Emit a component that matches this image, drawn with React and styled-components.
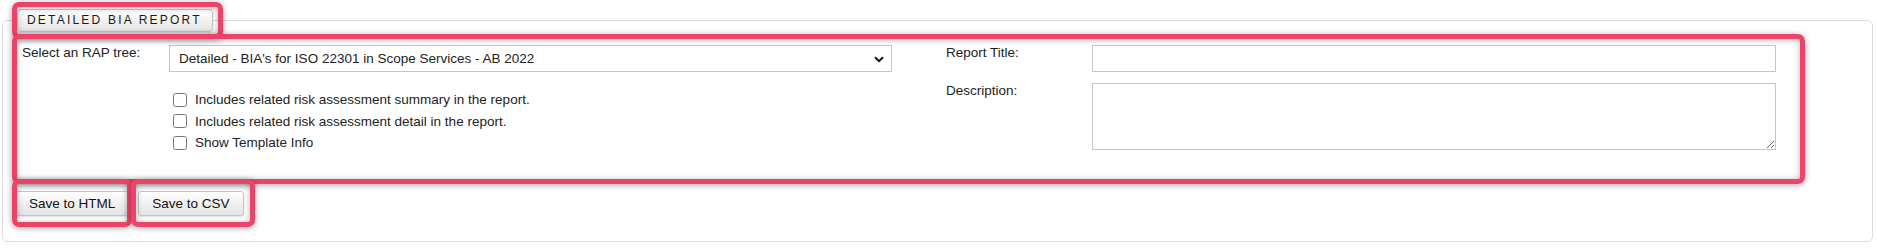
import React from 'react';
import styled, { createGlobalStyle } from 'styled-components';

const GlobalStyle = createGlobalStyle`
  html, body {
    margin: 0;
    padding: 0;
    background: #fff;
  }
  body {
    font-family: "Liberation Sans", Arial, sans-serif;
    font-size: 13.5px;
    color: #222;
  }
`;

const Page = styled.div`
  position: relative;
  width: 1877px;
  height: 250px;
  box-sizing: border-box;
  padding: 9px 4px 8px 2px;
`;

const Panel = styled.fieldset`
  margin: 0;
  border: 1px solid #dcdcdc;
  border-radius: 5px;
  padding: 13px 0 25px 14px;
  min-width: 0;
`;

const Legend = styled.legend`
  box-sizing: border-box;
  height: 23px;
  line-height: 21px;
  padding: 0 10px 0 9px;
  border: 1px solid #c9c9c9;
  border-radius: 4px;
  background: linear-gradient(#ffffff, #e4e4e4);
  box-shadow: 0 1px 2px rgba(0, 0, 0, 0.15);
  font-size: 12px;
  letter-spacing: 2.2px;
  text-transform: uppercase;
  color: #1a1a1a;
`;

const FormRow = styled.div`
  display: flex;
  gap: 49px;
  align-items: flex-start;
`;

const FieldGroup = styled.div`
  display: grid;
  grid-template-columns: ${p => p.$label}px ${p => p.$field}px;
  row-gap: 11px;
`;

const Label = styled.div`
  padding-left: 5px;
  line-height: 15px;
`;

const SelectWrap = styled.div`
  position: relative;
  height: 27px;
`;

const Select = styled.select`
  appearance: none;
  box-sizing: border-box;
  width: 100%;
  height: 27px;
  border: 1px solid #c6c6c6;
  border-radius: 0;
  background: #fff;
  padding: 0 24px 0 9px;
  font-family: inherit;
  font-size: 13.5px;
  color: #222;
  outline: none;
`;

const Chevron = styled.svg`
  position: absolute;
  right: 8px;
  top: 11px;
  pointer-events: none;
`;

const TextInput = styled.input`
  box-sizing: border-box;
  width: 100%;
  height: 27px;
  border: 1px solid #c6c6c6;
  margin: 0;
  padding: 0 6px;
  font-family: inherit;
  font-size: 13.5px;
  outline: none;
`;

const TextArea = styled.textarea`
  box-sizing: border-box;
  display: block;
  width: 100%;
  height: 67px;
  border: 1px solid #c6c6c6;
  margin: 0;
  padding: 4px 6px;
  font-family: inherit;
  font-size: 13.5px;
  outline: none;
`;

const CheckList = styled.div`
  padding-top: 6px;
`;

const CheckRow = styled.label`
  display: flex;
  align-items: center;
  height: 21.5px;
`;

const Check = styled.input`
  width: 14px;
  height: 14px;
  margin: 0 8px 0 4px;
`;

const ButtonRow = styled.div`
  display: flex;
  gap: 9px;
  margin: 37px 0 0 -2px;
`;

const Button = styled.button`
  box-sizing: border-box;
  height: 25px;
  padding: 0 13px;
  border: 1px solid #c5c5c5;
  border-radius: 3px;
  background: linear-gradient(#ffffff, #e3e3e3);
  box-shadow: 0 1px 2px rgba(0, 0, 0, 0.12);
  font-family: inherit;
  font-size: 13.5px;
  color: #111;
`;

const Highlight = styled.div`
  position: absolute;
  box-sizing: border-box;
  left: ${p => p.$x}px;
  top: ${p => p.$y}px;
  width: ${p => p.$w}px;
  height: ${p => p.$h}px;
  border: 5px solid #ea4468;
  border-radius: 7px;
  box-shadow: 0 1px 6px rgba(0, 0, 0, 0.35), inset 0 1px 6px rgba(0, 0, 0, 0.3);
  pointer-events: none;
`;

const checks = [
  'Includes related risk assessment summary in the report.',
  'Includes related risk assessment detail in the report.',
  'Show Template Info',
];

export default function App() {
  return (
    <Page>
      <GlobalStyle />
      <Panel>
        <Legend>Detailed BIA Report</Legend>
        <FormRow>
          <FieldGroup $label={152} $field={723}>
            <Label>Select an RAP tree:</Label>
            <SelectWrap>
              <Select defaultValue="ab2022">
                <option value="ab2022">Detailed - BIA's for ISO 22301 in Scope Services - AB 2022</option>
              </Select>
              <Chevron width="10" height="7" viewBox="0 0 10 7">
                <path d="M1 1.2 L5 5.2 L9 1.2" fill="none" stroke="#111" strokeWidth="2" />
              </Chevron>
            </SelectWrap>
            <div />
            <CheckList>
              {checks.map(text => (
                <CheckRow key={text}>
                  <Check type="checkbox" />
                  {text}
                </CheckRow>
              ))}
            </CheckList>
          </FieldGroup>
          <FieldGroup $label={151} $field={684}>
            <Label>Report Title:</Label>
            <TextInput type="text" />
            <Label>Description:</Label>
            <TextArea />
          </FieldGroup>
        </FormRow>
        <ButtonRow>
          <Button>Save to HTML</Button>
          <Button>Save to CSV</Button>
        </ButtonRow>
      </Panel>
      <Highlight $x={12} $y={2} $w={211} $h={37} />
      <Highlight $x={12} $y={34} $w={1793} $h={150} />
      <Highlight $x={12} $y={179} $w={120} $h={48} />
      <Highlight $x={131} $y={179} $w={124} $h={48} />
    </Page>
  );
}
